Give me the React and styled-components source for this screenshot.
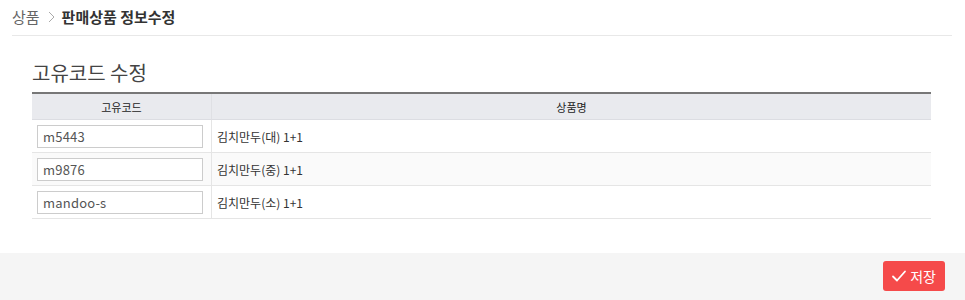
import styled, { createGlobalStyle } from "styled-components";

const GlobalStyle = createGlobalStyle`
  body {
    margin: 0;
    background: #ffffff;
    font-family: "Noto Sans CJK KR", "Noto Sans", sans-serif;
    color: #333;
  }
`;

const Page = styled.div`
  width: 965px;
  height: 300px;
  display: flex;
  flex-direction: column;
  box-sizing: border-box;
`;

const Breadcrumb = styled.div`
  display: flex;
  align-items: center;
  gap: 7px;
  height: 36px;
  margin: 0 13px 0 12px;
  border-bottom: 1px solid #e8e8e8;
  box-sizing: border-box;
  font-size: 15px;
  padding-bottom: 2px;
`;

const Crumb = styled.span`
  color: ${(props) => (props.$current ? "#333" : "#666")};
  font-weight: ${(props) => (props.$current ? 700 : 400)};
`;

const Sep = styled.svg`
  width: 7px;
  height: 12px;
  margin: 0 0 0 1px;
`;

const Section = styled.div`
  padding: 24px 34px 0 32px;
  flex: 1;
`;

const Title = styled.h2`
  margin: 0 0 6px 0;
  font-size: 20px;
  font-weight: 400;
  color: #444;
  line-height: 26px;
`;

const Table = styled.div`
  display: grid;
  grid-template-columns: 179px 1fr;
  border-top: 2px solid #777;
`;

const HeadCell = styled.div`
  height: 25px;
  display: flex;
  align-items: center;
  justify-content: center;
  background: #e9eaee;
  border-bottom: 1px solid #dcdde2;
  border-left: ${(props) => (props.$first ? "none" : "1px solid #dfe0e4")};
  font-size: 11px;
  color: #222;
`;

const Cell = styled.div`
  height: 33px;
  display: flex;
  align-items: center;
  box-sizing: border-box;
  background: ${(props) => (props.$alt ? "#fafafa" : "#fff")};
  border-bottom: 1px solid #e5e5e5;
  border-left: ${(props) => (props.$first ? "none" : "1px solid #e5e5e5")};
  padding-left: 5px;
  font-size: 12px;
  color: #333;
`;

const CodeInput = styled.input`
  width: 166px;
  height: 23px;
  box-sizing: border-box;
  border: 1px solid #cccccc;
  padding: 0 5px;
  font-family: "Noto Sans CJK KR", "Noto Sans", sans-serif;
  font-size: 13px;
  letter-spacing: 0.2px;
  color: #555;
  background: #fff;
  outline: none;
`;

const Footer = styled.div`
  height: 47px;
  background: #f5f5f5;
  display: flex;
  justify-content: flex-end;
  align-items: flex-start;
  padding: 8px 20px 0 0;
  box-sizing: border-box;
`;

const SaveButton = styled.button`
  display: flex;
  align-items: center;
  gap: 3px;
  height: 30px;
  padding: 0 9px 0 8px;
  border: none;
  border-radius: 3px;
  background: #f54a4a;
  color: #fff;
  font-family: "Noto Sans CJK KR", "Noto Sans", sans-serif;
  font-size: 14px;
`;

const rows = [
  { code: "m5443", name: "김치만두(대) 1+1" },
  { code: "m9876", name: "김치만두(중) 1+1" },
  { code: "mandoo-s", name: "김치만두(소) 1+1" },
];

export default function App() {
  return (
    <>
      <GlobalStyle />
      <Page>
        <Breadcrumb>
          <Crumb>상품</Crumb>
          <Sep viewBox="0 0 7 12" fill="none">
            <path d="M1 1 L6 6 L1 11" stroke="#aaa" strokeWidth="1" />
          </Sep>
          <Crumb $current>판매상품 정보수정</Crumb>
        </Breadcrumb>
        <Section>
          <Title>고유코드 수정</Title>
          <Table>
            <HeadCell $first>고유코드</HeadCell>
            <HeadCell>상품명</HeadCell>
            {rows.map((row, i) => [
              <Cell key={row.code + "c"} $first $alt={i === 1}>
                <CodeInput defaultValue={row.code} />
              </Cell>,
              <Cell key={row.code + "n"} $alt={i === 1}>
                {row.name}
              </Cell>,
            ])}
          </Table>
        </Section>
        <Footer>
          <SaveButton>
            <svg width="16" height="16" viewBox="0 0 16 16" fill="none">
              <path d="M2 8.5 L6 12.5 L14 3.5" stroke="#fff" strokeWidth="1.8" strokeLinecap="round" strokeLinejoin="round" />
            </svg>
            저장
          </SaveButton>
        </Footer>
      </Page>
    </>
  );
}
